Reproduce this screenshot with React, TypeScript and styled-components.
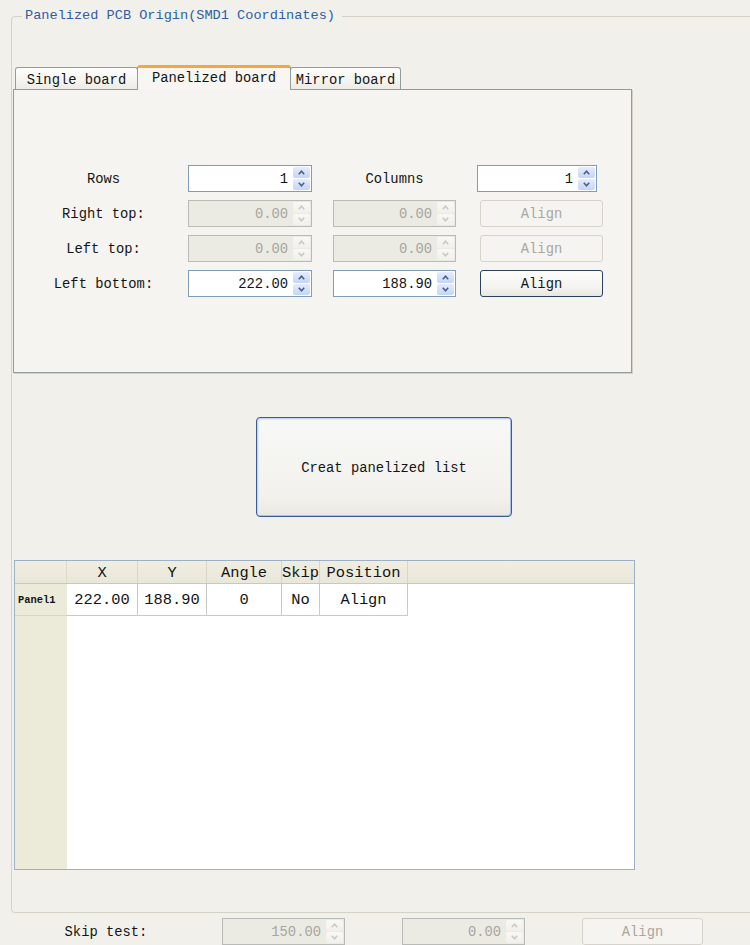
import React from "react";
import styled, { createGlobalStyle, css } from "styled-components";

const GlobalStyle = createGlobalStyle`
  html, body {
    margin: 0;
    padding: 0;
    background: #f1f0eb;
  }
  body {
    width: 750px;
    height: 945px;
    overflow: hidden;
    font-family: "Liberation Mono", "DejaVu Sans Mono", monospace;
    font-size: 13.8px;
    color: #141414;
  }
  * { box-sizing: border-box; }
`;

const Page = styled.div`
  width: 750px;
  height: 945px;
  overflow: hidden;
  padding: 8px 0 0 11px;
  background: #f1f0eb;
`;

const Group = styled.fieldset`
  margin: 0;
  width: 760px;
  min-width: 0;
  border: 1px solid #d4d2c6;
  border-radius: 4px;
  padding: 41px 0 42px 2px;
`;

const Legend = styled.legend`
  margin-left: 8px;
  padding: 0 7px 0 3px;
  font-size: 13.6px;
  line-height: 16px;
  color: #2f5da6;
`;

/* ---------- tabs ---------- */

const TabStrip = styled.div`
  display: flex;
  align-items: flex-end;
  height: 24px;
  margin-left: 1px;
  position: relative;
  z-index: 1;
`;

const Tab = styled.div<{ $w: number; $active?: boolean }>`
  width: ${(p) => p.$w}px;
  height: 22px;
  display: flex;
  align-items: center;
  justify-content: center;
  padding-top: 3px;
  border: 1px solid #939c9d;
  border-bottom: none;
  border-radius: 3px 3px 0 0;
  background: linear-gradient(#fdfdfc, #f3f2ee 70%, #ebeae4);
  white-space: nowrap;
  ${(p) =>
    p.$active &&
    css`
      height: 25px;
      margin-bottom: -1px;
      padding-top: 0;
      padding-bottom: 2px;
      border-top: 3px solid #f2a83e;
      background: #f7f6f3;
      margin-left: -1px;
      margin-right: -1px;
    `}
`;

const Pane = styled.div`
  width: 619px;
  height: 284px;
  margin-left: -1px;
  border: 1px solid #939c9d;
  background: #f5f4f0;
  box-shadow: 1px 1px 0 #d3d1c8;
  padding: 75px 0 0 26px;
`;

const FormGrid = styled.div<{ $cols: string; $gap: number }>`
  display: grid;
  grid-template-columns: ${(p) => p.$cols};
  column-gap: ${(p) => p.$gap}px;
  row-gap: 8px;
  grid-auto-rows: 27px;
  align-items: stretch;
`;

const Label = styled.div`
  display: flex;
  align-items: center;
  justify-content: center;
  white-space: nowrap;
  padding-top: 2px;
`;

/* ---------- spin box ---------- */

const SpinFrame = styled.div<{ $disabled?: boolean; $w?: number }>`
  display: flex;
  align-items: stretch;
  width: ${(p) => (p.$w ? `${p.$w}px` : "100%")};
  border: 1px solid ${(p) => (p.$disabled ? "#b9bbb6" : "#7f9db9")};
  background: ${(p) => (p.$disabled ? "#ebebe4" : "#ffffff")};
  color: ${(p) => (p.$disabled ? "#a6a59f" : "#141414")};
  padding: 1px;
`;

const SpinValue = styled.div`
  flex: 1;
  display: flex;
  align-items: center;
  justify-content: flex-end;
  padding: 2px 5px 0 0;
`;

const SpinButtons = styled.div`
  width: 17px;
  display: flex;
  flex-direction: column;
  gap: 1px;
`;

const SpinHalf = styled.div<{ $disabled?: boolean }>`
  flex: 1;
  display: flex;
  align-items: center;
  justify-content: center;
  border-radius: 2px;
  background: ${(p) =>
    p.$disabled
      ? "linear-gradient(#f8f8f5, #f1f0eb)"
      : "linear-gradient(#e4ecfd, #c4d5f8)"};
  color: ${(p) => (p.$disabled ? "#c9c8c2" : "#4c5f86")};
`;

const Chevron = ({ up }: { up?: boolean }) => (
  <svg width="7" height="5" viewBox="0 0 7 5">
    <path
      d={up ? "M0.8 4.2 L3.5 1.2 L6.2 4.2" : "M0.8 0.8 L3.5 3.8 L6.2 0.8"}
      fill="none"
      stroke="currentColor"
      strokeWidth="1.6"
    />
  </svg>
);

const Spin = ({ value, disabled, w }: { value: string; disabled?: boolean; w?: number }) => (
  <SpinFrame $disabled={disabled} $w={w}>
    <SpinValue>{value}</SpinValue>
    <SpinButtons>
      <SpinHalf $disabled={disabled}>
        <Chevron up />
      </SpinHalf>
      <SpinHalf $disabled={disabled}>
        <Chevron />
      </SpinHalf>
    </SpinButtons>
  </SpinFrame>
);

/* ---------- buttons ---------- */

const AlignButton = styled.div<{ $disabled?: boolean; $w?: number }>`
  justify-self: end;
  width: ${(p) => (p.$w ? `${p.$w}px` : "100%")};
  display: flex;
  align-items: center;
  justify-content: center;
  padding-top: 2px;
  border-radius: 3px;
  border: 1px solid ${(p) => (p.$disabled ? "#d5d3ca" : "#2c405f")};
  background: ${(p) =>
    p.$disabled ? "#f5f4f0" : "linear-gradient(#fdfdfb, #f3f2ee 70%, #e7e5dd)"};
  color: ${(p) => (p.$disabled ? "#a8a7a0" : "#141414")};
`;

const CreateButton = styled.div`
  margin: 44px 0 0 242px;
  width: 256px;
  height: 100px;
  display: flex;
  align-items: center;
  justify-content: center;
  padding-top: 2px;
  border: 1px solid #3b5c93;
  border-radius: 4px;
  background: linear-gradient(#f8f8f6, #f2f1ed 80%, #e9e8e2);
  box-shadow: inset 1px 1px 0 #c3d4f3, inset -1px -1px 0 #a9c0ea,
    inset 2px 2px 0 #e3ebfa;
`;

/* ---------- table ---------- */

const Table = styled.div`
  margin-top: 43px;
  width: 621px;
  height: 310px;
  border: 1px solid #9fb0c4;
  background: #ffffff;
  display: flex;
  flex-direction: column;
  font-size: 15.4px;
`;

const HeaderRow = styled.div`
  display: flex;
  height: 23px;
  flex-shrink: 0;
  background: linear-gradient(#efeee2, #e9e7d8);
  border-bottom: 1px solid #cbc8b8;
`;

const HeaderCell = styled.div<{ $w: number }>`
  width: ${(p) => p.$w}px;
  flex-shrink: 0;
  display: flex;
  align-items: center;
  justify-content: center;
  padding-top: 2px;
  border-right: 1px solid #d9d6c8;
  &:first-child {
    border-right-color: #dedbcd;
  }
`;

const HeaderFill = styled.div`
  flex: 1;
`;

const Body = styled.div`
  flex: 1;
  display: flex;
`;

const RowHeadColumn = styled.div`
  width: 52px;
  background: #ecead9;
  flex-shrink: 0;
`;

const RowHead = styled.div`
  height: 32px;
  display: flex;
  align-items: center;
  padding-left: 3px;
  font-size: 10.4px;
  font-weight: 700;
  border-bottom: 1px solid #d8d5c6;
`;

const DataArea = styled.div`
  flex: 1;
`;

const DataRow = styled.div`
  display: flex;
  height: 32px;
`;

const DataCell = styled.div<{ $w: number }>`
  width: ${(p) => p.$w}px;
  display: flex;
  align-items: center;
  justify-content: center;
  padding-top: 1px;
  border-right: 1px solid #c9c9c9;
  border-bottom: 1px solid #c9c9c9;
`;

/* ---------- skip row below the group ---------- */

const SkipRow = styled.div`
  margin-top: 5px;
  height: 27px;
  padding-left: 36px;
  display: grid;
  grid-template-columns: 118px 123px 123px 121px;
  column-gap: 57px;
  align-items: stretch;
`;

const columns = [
  { key: "X", w: 71 },
  { key: "Y", w: 69 },
  { key: "Angle", w: 75 },
  { key: "Skip", w: 38 },
  { key: "Position", w: 88 },
];

const rowValues = ["222.00", "188.90", "0", "No", "Align"];

export default function App() {
  return (
    <>
      <GlobalStyle />
      <Page>
        <Group>
          <Legend>Panelized PCB Origin(SMD1 Coordinates)</Legend>

          <TabStrip>
            <Tab $w={123}>Single board</Tab>
            <Tab $w={154} $active>
              Panelized board
            </Tab>
            <Tab $w={111}>Mirror board</Tab>
          </TabStrip>

          <Pane>
            <FormGrid $cols="127px 124px 123px 126px" $gap={21}>
              <Label>Rows</Label>
              <Spin value="1" />
              <Label>Columns</Label>
              <Spin value="1" w={120} />

              <Label>Right top:</Label>
              <Spin value="0.00" disabled />
              <Spin value="0.00" disabled />
              <AlignButton $disabled $w={123}>Align</AlignButton>

              <Label>Left top:</Label>
              <Spin value="0.00" disabled />
              <Spin value="0.00" disabled />
              <AlignButton $disabled $w={123}>Align</AlignButton>

              <Label>Left bottom:</Label>
              <Spin value="222.00" />
              <Spin value="188.90" />
              <AlignButton $w={123}>Align</AlignButton>
            </FormGrid>
          </Pane>

          <CreateButton>Creat panelized list</CreateButton>

          <Table>
            <HeaderRow>
              <HeaderCell $w={52} />
              {columns.map((c) => (
                <HeaderCell key={c.key} $w={c.w}>
                  {c.key}
                </HeaderCell>
              ))}
              <HeaderFill />
            </HeaderRow>
            <Body>
              <RowHeadColumn>
                <RowHead>Panel1</RowHead>
              </RowHeadColumn>
              <DataArea>
                <DataRow>
                  {columns.map((c, i) => (
                    <DataCell key={c.key} $w={c.w}>
                      {rowValues[i]}
                    </DataCell>
                  ))}
                </DataRow>
              </DataArea>
            </Body>
          </Table>
        </Group>

        <SkipRow>
          <Label>Skip test:</Label>
          <Spin value="150.00" disabled />
          <Spin value="0.00" disabled />
          <AlignButton $disabled>Align</AlignButton>
        </SkipRow>
      </Page>
    </>
  );
}
